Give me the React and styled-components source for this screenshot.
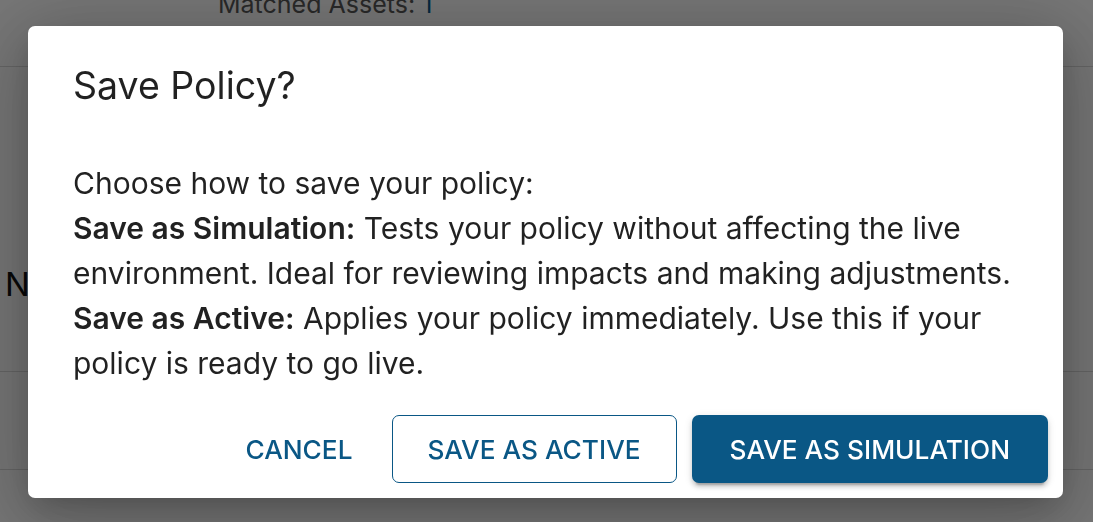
import React from 'react'
import styled, { createGlobalStyle } from 'styled-components'

const GlobalStyle = createGlobalStyle`
  html, body {
    margin: 0;
    padding: 0;
    height: 100%;
    overflow: hidden;
  }
  body {
    font-family: Inter, 'Noto Sans', sans-serif;
    background: #fff;
    color: rgba(0, 0, 0, 0.87);
  }
`

const colors = {
  primary: '#0a5785',
  text: 'rgba(0, 0, 0, 0.87)',
  line: '#d2d2d2',
}

const Page = styled.div`
  width: 100%;
  height: 522px;
  background: #f6f6f6;
  overflow: hidden;
`

const PageHeader = styled.div`
  height: 66px;
  border-bottom: 1px solid ${colors.line};
  padding-left: 218px;
  overflow: hidden;
`

const Matched = styled.div`
  margin-top: -14px;
  font-size: 25px;
  line-height: 36px;
  color: #555;

  span {
    color: ${colors.primary};
  }
`

const PageRow = styled.div`
  height: ${(p) => p.h}px;
  border-bottom: 1px solid ${colors.line};
  padding: ${(p) => p.pt || 0}px 0 0 5px;
  box-sizing: border-box;
  font-size: 33px;
  line-height: 40px;
  color: #111;
`

const Backdrop = styled.div`
  position: fixed;
  inset: 0;
  background: rgba(0, 0, 0, 0.52);
  display: flex;
  align-items: center;
  justify-content: center;
`

const Dialog = styled.div`
  width: 1035px;
  margin: 2px 0 0 -2px;
  background: #fff;
  border-radius: 7px;
  box-shadow: 0 21px 71px 11px rgba(0, 0, 0, 0.14),
    0 11px 28px -7px rgba(0, 0, 0, 0.2), 0 9px 86px 15px rgba(0, 0, 0, 0.12);
  display: flex;
  flex-direction: column;
`

const Title = styled.h2`
  margin: 0;
  padding: 30px 45px 0;
  font-size: 37.5px;
  font-weight: 400;
  line-height: 60px;
  color: ${colors.text};
`

const Content = styled.div`
  padding: 45px 45px 14px;
  font-size: 30px;
  line-height: 45px;
  color: ${colors.text};

  p {
    margin: 0;
  }

  strong {
    font-weight: 600;
  }
`

const Actions = styled.div`
  display: flex;
  justify-content: flex-end;
  align-items: center;
  gap: 15px;
  padding: 15px;
`

const padFor = { text: 24, outlined: 35, contained: 38 }

const Button = styled.button`
  height: 68px;
  padding: 0 ${(p) => padFor[p.variant]}px;
  box-sizing: border-box;
  border-radius: 7px;
  font-family: Inter, 'Noto Sans', sans-serif;
  font-size: 26.25px;
  font-weight: 500;
  text-transform: uppercase;
  cursor: pointer;
  color: ${(p) => (p.variant === 'contained' ? '#fff' : colors.primary)};
  background: ${(p) => (p.variant === 'contained' ? colors.primary : 'transparent')};
  border: ${(p) =>
    p.variant === 'outlined' ? `1.5px solid ${colors.primary}` : 'none'};
  box-shadow: ${(p) =>
    p.variant === 'contained'
      ? '0 6px 2px -4px rgba(0,0,0,0.2), 0 4px 4px 0 rgba(0,0,0,0.14), 0 2px 9px 0 rgba(0,0,0,0.12)'
      : 'none'};
`

export default function App() {
  return (
    <>
      <GlobalStyle />
      <Page>
        <PageHeader>
          <Matched>
            Matched Assets: <span>1</span>
          </Matched>
        </PageHeader>
        <PageRow h={305} pt={197}>
          Name
        </PageRow>
        <PageRow h={98} />
      </Page>
      <Backdrop>
        <Dialog role="dialog">
          <Title>Save Policy?</Title>
          <Content>
            <p>Choose how to save your policy:</p>
            <p>
              <strong>Save as Simulation:</strong> Tests your policy without
              affecting the live environment. Ideal for reviewing impacts and
              making adjustments.
            </p>
            <p>
              <strong>Save as Active:</strong> Applies your policy immediately.
              Use this if your policy is ready to go live.
            </p>
          </Content>
          <Actions>
            <Button variant="text">Cancel</Button>
            <Button variant="outlined">Save as Active</Button>
            <Button variant="contained">Save as Simulation</Button>
          </Actions>
        </Dialog>
      </Backdrop>
    </>
  )
}
